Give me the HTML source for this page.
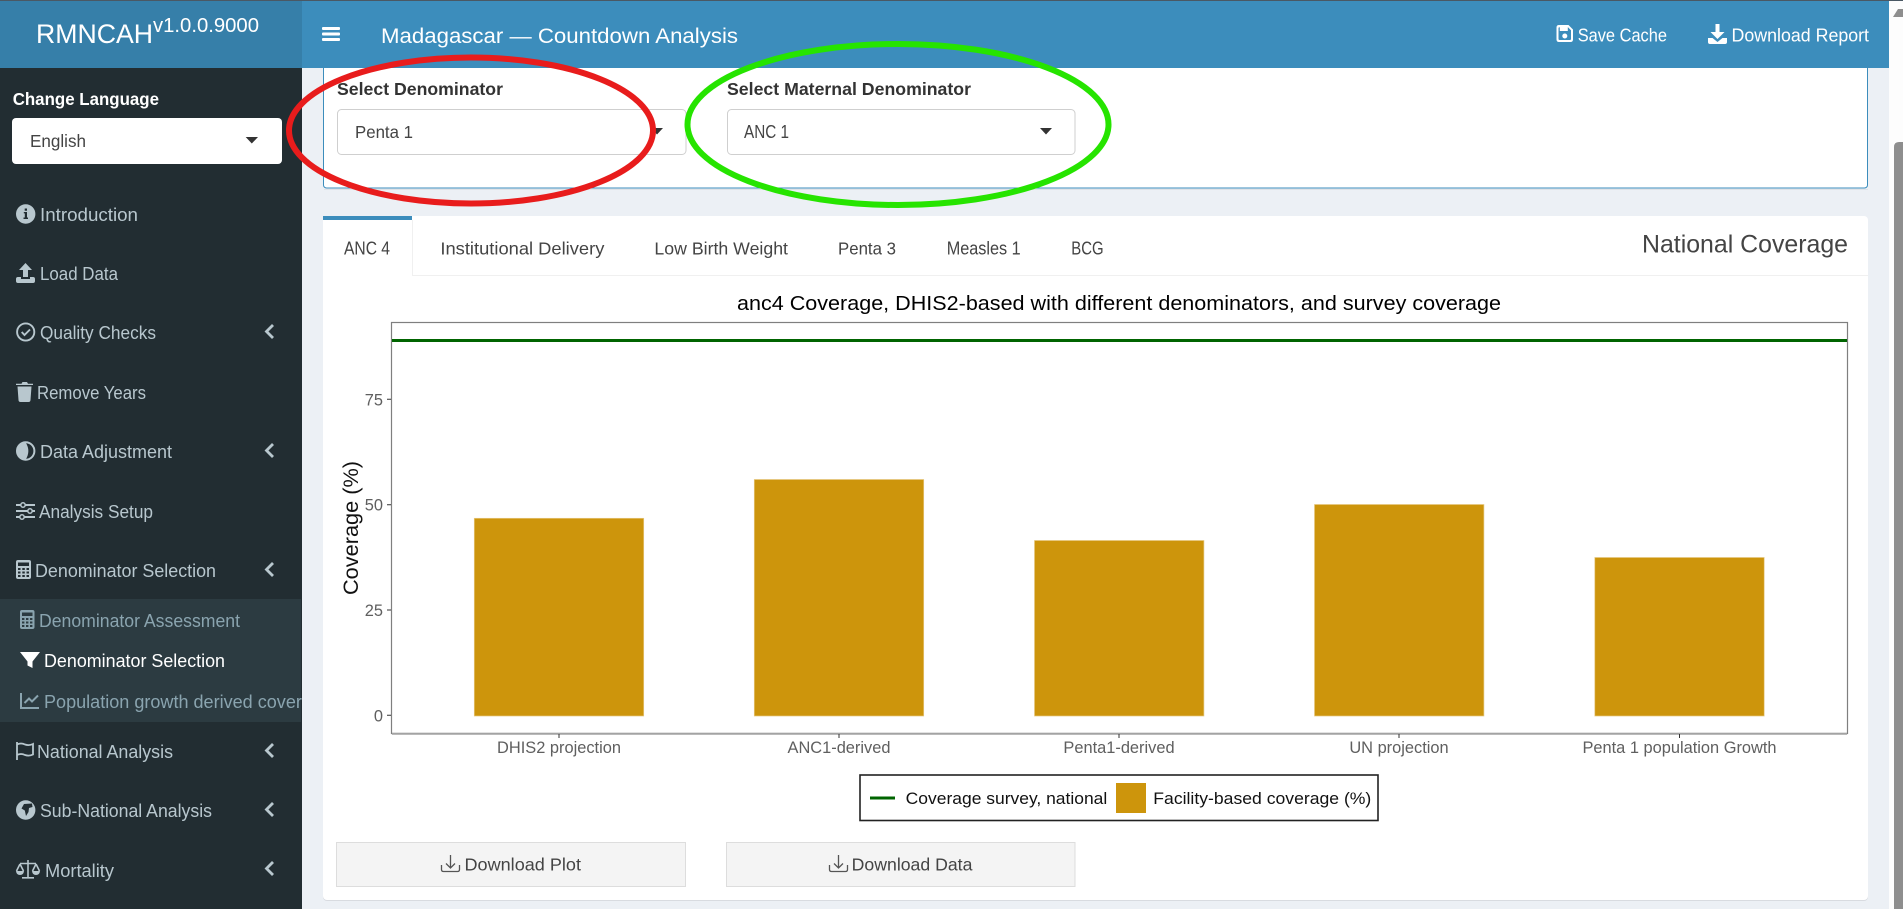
<!DOCTYPE html>
<html lang="en">
<head>
<meta charset="utf-8">
<title>Madagascar — Countdown Analysis</title>
<style>
html,body{margin:0;padding:0;width:1903px;height:909px;overflow:hidden;background:#ecf0f5}
svg{display:block}
text{font-family:"Liberation Sans",Arial,sans-serif}
.s{font-size:18.5px;fill:#b8c7ce}
.m{font-size:18.5px;fill:#8aa4af}
.t{font-size:17.5px;fill:#444}
.u{font-size:18.5px;fill:#444}
.b{font-size:17.5px;font-weight:bold;fill:#333}
.h{font-size:18px;fill:#fff}
.a{font-size:16.4px;fill:#5f5f5f}
.l{font-size:16.4px;fill:#111}
</style>
</head>
<body>
<svg xmlns="http://www.w3.org/2000/svg" width="1903" height="909" viewBox="0 0 1903 909">
<defs><clipPath id="side"><rect x="0" y="600" width="302" height="122"/></clipPath></defs>
<rect width="1903" height="909" fill="#ecf0f5"/>

<!-- scrollbar -->
<rect x="1889" y="0" width="14" height="909" fill="#fdfdfd"/>
<path d="M1893 17 L1898 9 L1903 9 L1903 17 Z" fill="#8e8e8e"/>
<path d="M1894 909 V147 Q1894 142 1899 142 H1903 V909 Z" fill="#8e8e8e"/>

<!-- top box -->
<rect x="323.5" y="50" width="1544" height="138" rx="3" fill="#fff" stroke="#3c8dbc" stroke-width="1"/>
<rect x="324" y="189" width="1544" height="1" fill="#dfe2e7"/>
<text class="b" x="337" y="95" textLength="166" lengthAdjust="spacingAndGlyphs">Select Denominator</text>
<text class="b" x="727" y="95" textLength="244" lengthAdjust="spacingAndGlyphs">Select Maternal Denominator</text>
<rect x="337.5" y="109.5" width="348.500" height="45" rx="4" fill="#fff" stroke="#cfcfcf"/>
<rect x="727.5" y="109.5" width="347.500" height="45" rx="4" fill="#fff" stroke="#cfcfcf"/>
<text class="t" x="355" y="138" textLength="58" lengthAdjust="spacingAndGlyphs">Penta 1</text>
<text class="u" x="744" y="138" textLength="45" lengthAdjust="spacingAndGlyphs">ANC 1</text>
<path d="M651 128 H663 L657 134.500 Z" fill="#333"/>
<path d="M1040 128 H1052 L1046 134.500 Z" fill="#333"/>

<!-- main card -->
<rect x="323" y="217" width="1545" height="684" rx="4" fill="#d8dbe0"/>
<rect x="323" y="216" width="1545" height="684" rx="4" fill="#fff"/>
<rect x="412" y="275" width="1456" height="1" fill="#f0f0f0"/>
<rect x="412" y="220" width="1" height="56" fill="#f0f0f0"/>
<rect x="323" y="216" width="89" height="4" fill="#3c8dbc"/>
<text class="u" x="344" y="254.500" textLength="46" lengthAdjust="spacingAndGlyphs">ANC 4</text>
<text class="t" x="440.400" y="254.500" textLength="164" lengthAdjust="spacingAndGlyphs">Institutional Delivery</text>
<text class="t" x="654.400" y="254.500" textLength="133.600" lengthAdjust="spacingAndGlyphs">Low Birth Weight</text>
<text class="t" x="838" y="254.500" textLength="58" lengthAdjust="spacingAndGlyphs">Penta 3</text>
<text class="u" x="946.700" y="254.500" textLength="74" lengthAdjust="spacingAndGlyphs">Measles 1</text>
<text class="u" x="1071.300" y="254.500" textLength="32.300" lengthAdjust="spacingAndGlyphs">BCG</text>
<text x="1642" y="252.700" font-size="25" fill="#444" textLength="206" lengthAdjust="spacingAndGlyphs">National Coverage</text>

<!-- chart -->
<text x="737" y="310" font-size="20.500" fill="#000" textLength="764" lengthAdjust="spacingAndGlyphs">anc4 Coverage, DHIS2-based with different denominators, and survey coverage</text>
<rect x="391.500" y="322.500" width="1456" height="411" fill="#fff" stroke="#7f7f7f" stroke-width="1.200"/>
<path d="M392 733.700 H1847" stroke="#a3a3a3" stroke-width="2"/>
<rect x="392" y="339" width="1455" height="3" fill="#006400"/>
<g fill="#cd950c" stroke="#e6c880" stroke-width="0.700">
<rect x="474.300" y="518.300" width="169.400" height="197.700"/>
<rect x="754.300" y="479.500" width="169.400" height="236.500"/>
<rect x="1034.500" y="540.500" width="169.400" height="175.500"/>
<rect x="1314.500" y="504.500" width="169.400" height="211.500"/>
<rect x="1594.800" y="557.500" width="169.400" height="158.500"/>
</g>
<g stroke="#333" stroke-width="1">
<path d="M387 399.300 H391 M387 504.700 H391 M387 610 H391 M387 715.300 H391"/>
<path d="M559 734 V738 M839 734 V738 M1119 734 V738 M1399 734 V738 M1679.500 734 V738"/>
</g>
<g text-anchor="end">
<text class="a" x="383" y="405.300">75</text>
<text class="a" x="383" y="510.700">50</text>
<text class="a" x="383" y="616">25</text>
<text class="a" x="383" y="721.300">0</text>
</g>
<g text-anchor="middle">
<text class="a" x="559" y="753">DHIS2 projection</text>
<text class="a" x="839" y="753">ANC1-derived</text>
<text class="a" x="1119" y="753">Penta1-derived</text>
<text class="a" x="1399" y="753">UN projection</text>
<text class="a" x="1679.500" y="753">Penta 1 population Growth</text>
</g>
<text transform="translate(358,595) rotate(-90)" x="0" y="0" font-size="21.600" fill="#111" textLength="134" lengthAdjust="spacingAndGlyphs">Coverage (%)</text>

<!-- legend -->
<rect x="860" y="775" width="518" height="45.500" fill="#fff" stroke="#222" stroke-width="1.600"/>
<rect x="870" y="796.500" width="25" height="3" fill="#006400"/>
<text class="l" x="905.700" y="804" textLength="201.600" lengthAdjust="spacingAndGlyphs">Coverage survey, national</text>
<rect x="1116" y="783" width="30" height="30" fill="#cd950c"/>
<text class="l" x="1153.300" y="804" textLength="218" lengthAdjust="spacingAndGlyphs">Facility-based coverage (%)</text>

<!-- download buttons -->
<rect x="336.500" y="842.500" width="349" height="44" fill="#f4f4f4" stroke="#ddd"/>
<rect x="726.500" y="842.500" width="348.500" height="44" fill="#f4f4f4" stroke="#ddd"/>
<g fill="none" stroke="#555" stroke-width="1.300">
<path d="M450.500 855 V868 M446 863.500 L450.500 868 L455 863.500"/>
<path d="M441.500 865 V869.500 Q441.500 871.500 443.500 871.500 H457.500 Q459.500 871.500 459.500 869.500 V865"/>
<path d="M838.500 855 V868 M834 863.500 L838.500 868 L843 863.500"/>
<path d="M829.500 865 V869.500 Q829.500 871.500 831.500 871.500 H845.500 Q847.500 871.500 847.500 869.500 V865"/>
</g>
<text class="t" x="464.500" y="870.500" textLength="116.500" lengthAdjust="spacingAndGlyphs">Download Plot</text>
<text class="t" x="851.700" y="870.500" textLength="120.700" lengthAdjust="spacingAndGlyphs">Download Data</text>

<!-- header -->
<rect x="0" y="0" width="1889" height="68" fill="#3c8dbc"/>
<rect x="0" y="0" width="302" height="68" fill="#367fa9"/>
<rect x="0" y="0" width="1903" height="1" fill="#4a5864"/>
<text x="36" y="43" font-size="26.700" fill="#fff" textLength="117" lengthAdjust="spacingAndGlyphs">RMNCAH</text>
<text x="153" y="32" font-size="20.300" fill="#fff" textLength="106" lengthAdjust="spacingAndGlyphs">v1.0.0.9000</text>
<g fill="#fff"><rect x="322" y="27" width="18" height="3" rx="1"/><rect x="322" y="32.500" width="18" height="3" rx="1"/><rect x="322" y="38" width="18" height="3" rx="1"/></g>
<text x="381" y="43" font-size="21" fill="#fff" textLength="357" lengthAdjust="spacingAndGlyphs">Madagascar — Countdown Analysis</text>
<!-- save icon -->
<g fill="#fff">
<path d="M1556.500 27.500 Q1556.500 25 1559 25 H1568.500 L1573 29.500 V39.500 Q1573 42 1570.500 42 H1559 Q1556.500 42 1556.500 39.500 Z M1558.500 28 V39 Q1558.500 40 1559.500 40 H1570 Q1571 40 1571 39 V30.300 L1568 27.200 H1559.500 Q1558.500 27.200 1558.500 28 Z" fill-rule="evenodd"/>
<rect x="1559.800" y="27" width="8" height="4"/>
<circle cx="1564.800" cy="36" r="2.500"/>
</g>
<text class="h" x="1577.700" y="41.300" textLength="89.300" lengthAdjust="spacingAndGlyphs">Save Cache</text>
<!-- download icon -->
<g fill="#fff">
<path d="M1715.500 24 H1719.500 V32 H1724.500 L1717.500 39 L1710.500 32 H1715.500 Z"/>
<path d="M1708 38 H1712.500 L1717.500 42 L1722.500 38 H1727 V42 Q1727 44 1725 44 H1710 Q1708 44 1708 42 Z"/>
</g>
<text class="h" x="1731.500" y="41.300" textLength="137.500" lengthAdjust="spacingAndGlyphs">Download Report</text>

<!-- sidebar -->
<rect x="0" y="68" width="302" height="841" fill="#222d32"/>
<rect x="0" y="599" width="301" height="123" fill="#2c3b41"/>
<text x="12.700" y="105" font-size="17.500" font-weight="bold" fill="#fff" textLength="146.300" lengthAdjust="spacingAndGlyphs">Change Language</text>
<rect x="12" y="118" width="270" height="46" rx="4" fill="#fff"/>
<text class="t" x="30" y="147" textLength="56" lengthAdjust="spacingAndGlyphs">English</text>
<path d="M245.700 137 H258 L251.800 143.500 Z" fill="#333"/>

<!-- Introduction -->
<circle cx="25.700" cy="214" r="9.700" fill="#b8c7ce"/>
<path d="M23.800 212 H27 V217.500 H28 V219 H23.500 V217.500 H24.800 V213.400 H23.800 Z M24.700 208.500 H27 V210.800 H24.700 Z" fill="#222d32"/>
<text class="s" x="40" y="221" textLength="98" lengthAdjust="spacingAndGlyphs">Introduction</text>
<!-- Load Data -->
<g fill="#b8c7ce"><path d="M25.500 263 L32 270 H28 V277 H23 V270 H19 Z"/><path d="M16 279 Q16 277 18 277 H21 V279 H30 V277 H33 Q35 277 35 279 V281 Q35 283 33 283 H18 Q16 283 16 281 Z"/></g>
<text class="s" x="40" y="280" textLength="78" lengthAdjust="spacingAndGlyphs">Load Data</text>
<!-- Quality Checks -->
<circle cx="25.700" cy="332" r="8.600" fill="none" stroke="#b8c7ce" stroke-width="1.900"/>
<path d="M21.700 332 L24.500 335 L30 329.500" fill="none" stroke="#b8c7ce" stroke-width="1.900"/>
<text class="s" x="40" y="339" textLength="116" lengthAdjust="spacingAndGlyphs">Quality Checks</text>
<!-- Remove Years -->
<g fill="#b8c7ce"><path d="M16 385 V383.800 H21.500 L22.500 382 H27 L28 383.800 H33 V385 Z"/><path d="M17.500 386.500 H31.500 L30.500 400 Q30.400 402 28.500 402 H20.500 Q18.600 402 18.500 400 Z"/></g>
<text class="s" x="37" y="399" textLength="109" lengthAdjust="spacingAndGlyphs">Remove Years</text>
<!-- Data Adjustment -->
<circle cx="25.700" cy="451" r="8.700" fill="#222d32" stroke="#b8c7ce" stroke-width="2"/>
<path d="M25.700 442.500 A8.500 8.500 0 0 0 25.700 459.500 Q31 451 25.700 442.500 Z" fill="#b8c7ce"/>
<text class="s" x="40" y="458" textLength="132" lengthAdjust="spacingAndGlyphs">Data Adjustment</text>
<!-- Analysis Setup -->
<g stroke="#b8c7ce" stroke-width="2" fill="#222d32"><path d="M16 505 H35 M16 511 H35 M16 517 H35"/><circle cx="23" cy="505" r="2.200" stroke-width="1.500"/><circle cx="30" cy="511" r="2.200" stroke-width="1.500"/><circle cx="22" cy="517" r="2.200" stroke-width="1.500"/></g>
<text class="s" x="39" y="518" textLength="114" lengthAdjust="spacingAndGlyphs">Analysis Setup</text>
<!-- Denominator Selection -->
<rect x="16" y="560" width="15" height="19" rx="2" fill="#b8c7ce"/>
<rect x="18" y="562.500" width="11" height="3.500" fill="#222d32"/>
<path d="M18 568 h2.500 v2 h-2.500 z M22.300 568 h2.500 v2 h-2.500 z M26.500 568 h2.500 v2 h-2.500 z M18 571.500 h2.500 v2 h-2.500 z M22.300 571.500 h2.500 v2 h-2.500 z M26.500 571.500 h2.500 v2 h-2.500 z M18 575 h2.500 v2 h-2.500 z M22.300 575 h2.500 v2 h-2.500 z M26.500 575 h2.500 v2 h-2.500 z" fill="#222d32"/>
<text class="s" x="35" y="577" textLength="181" lengthAdjust="spacingAndGlyphs">Denominator Selection</text>
<!-- sub: Denominator Assessment -->
<rect x="20" y="610" width="14.500" height="19" rx="2" fill="#8aa4af"/>
<rect x="22" y="612.500" width="10.500" height="3.500" fill="#2c3b41"/>
<path d="M22 618 h2.400 v2 h-2.400 z M26 618 h2.400 v2 h-2.400 z M30 618 h2.400 v2 h-2.400 z M22 621.500 h2.400 v2 h-2.400 z M26 621.500 h2.400 v2 h-2.400 z M30 621.500 h2.400 v2 h-2.400 z M22 625 h2.400 v2 h-2.400 z M26 625 h2.400 v2 h-2.400 z M30 625 h2.400 v2 h-2.400 z" fill="#2c3b41"/>
<text class="m" x="39" y="627" textLength="201" lengthAdjust="spacingAndGlyphs">Denominator Assessment</text>
<!-- sub: active -->
<path d="M20 652 H40 L32.500 661.500 V668 L27.500 665.500 V661.500 Z" fill="#fff"/>
<text x="44" y="667" font-size="18.500" fill="#fff" textLength="181" lengthAdjust="spacingAndGlyphs">Denominator Selection</text>
<!-- sub: Population -->
<path d="M21 693 V708 H39 M24.500 703 L29 698.500 L32 701.500 L38 695.500" fill="none" stroke="#8aa4af" stroke-width="2"/>
<g clip-path="url(#side)"><text class="m" x="44" y="708" textLength="288" lengthAdjust="spacingAndGlyphs">Population growth derived coverage</text></g>
<!-- National Analysis -->
<path d="M17 742 V760 M17 744.500 Q21 742.500 25 744.500 Q29 746 33 744 V754.500 Q29 756.500 25 755 Q21 753 17 755" fill="none" stroke="#b8c7ce" stroke-width="1.800"/>
<text class="s" x="37" y="758" textLength="136" lengthAdjust="spacingAndGlyphs">National Analysis</text>
<!-- Sub-National -->
<circle cx="25.700" cy="810" r="9.700" fill="#b8c7ce"/>
<path d="M24 804 L32 803.500 L32.500 807 L29 808 L28.500 812 L26 816 L24.800 810.500 L21.500 808.500 Z" fill="#222d32"/>
<text class="s" x="40" y="817" textLength="172" lengthAdjust="spacingAndGlyphs">Sub-National Analysis</text>
<!-- Mortality -->
<g fill="none" stroke="#b8c7ce" stroke-width="1.600">
<path d="M28 860 V877 M22 877.800 H34 M20 863.500 H36"/>
<path d="M20 864 L16.500 871 M20 864 L23.500 871 M36 864 L32.500 871 M36 864 L39.500 871"/>
</g>
<g fill="#b8c7ce"><path d="M16 871 H24 Q23.500 875 20 875 Q16.500 875 16 871 Z"/><path d="M32 871 H40 Q39.500 875 36 875 Q32.500 875 32 871 Z"/></g>
<text class="s" x="45" y="877" textLength="69" lengthAdjust="spacingAndGlyphs">Mortality</text>
<!-- chevrons -->
<g fill="none" stroke="#b8c7ce" stroke-width="2.800" stroke-linejoin="miter">
<path d="M273 325 L266.500 331.500 L273 338"/>
<path d="M273 444 L266.500 450.500 L273 457"/>
<path d="M273 563 L266.500 569.500 L273 576"/>
<path d="M273 744 L266.500 750.500 L273 757"/>
<path d="M273 803 L266.500 809.500 L273 816"/>
<path d="M273 862 L266.500 868.500 L273 875"/>
</g>

<!-- annotations -->
<ellipse cx="471" cy="130.500" rx="182" ry="73" fill="none" stroke="#e81c1c" stroke-width="6"/>
<ellipse cx="898" cy="124.500" rx="210.500" ry="80.500" fill="none" stroke="#26e400" stroke-width="6"/>
</svg>
</body>
</html>
